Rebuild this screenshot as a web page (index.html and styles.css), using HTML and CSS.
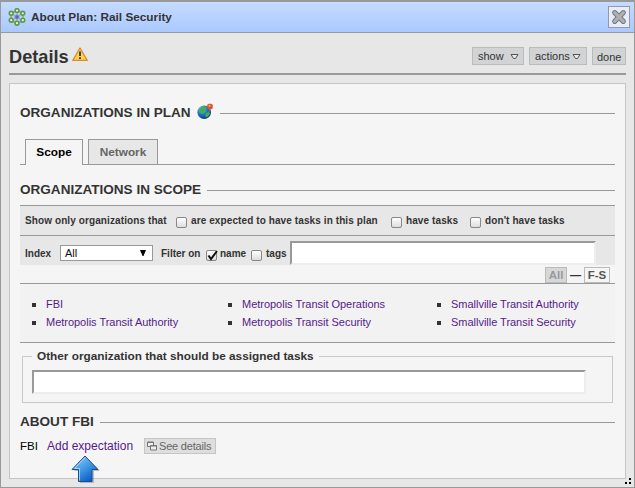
FILE: index.html
```html
<!DOCTYPE html>
<html lang="en">
<head>
<meta charset="utf-8">
<title>About Plan: Rail Security</title>
<link rel="stylesheet" href="styles.css">
</head>
<body>
<div class="window">
  <header class="titlebar">
    <svg class="plan-icon" viewBox="0 0 18 18" width="18" height="18">
      <circle cx="9" cy="9" r="6" fill="none" stroke="#8fb08b" stroke-width="1.8"/>
      <path d="M3 5 15 13M3 13 15 5M9 2V16" stroke="#98a8b0" stroke-width="1.2"/>
      <g fill="#e5f4df" stroke="#5a9950" stroke-width="1.6">
        <circle cx="9" cy="2.6" r="1.9"/><circle cx="9" cy="15.2" r="1.9"/>
        <circle cx="3.2" cy="5.3" r="1.9"/><circle cx="14.8" cy="5.3" r="1.9"/>
        <circle cx="3.2" cy="12.2" r="1.9"/><circle cx="14.8" cy="12.2" r="1.9"/>
      </g>
      <circle cx="9" cy="9" r="2.3" fill="#5b67ad" stroke="#9aa8d2"/>
    </svg>
    <span class="title">About Plan: Rail Security</span>
    <button class="close" aria-label="Close">
      <svg viewBox="0 0 16 16" width="16" height="16"><path d="M3.7 3.7 12.3 12.3M12.3 3.7 3.7 12.3" stroke="#777" stroke-width="5.2" stroke-linecap="round"/><path d="M3.7 3.7 12.3 12.3M12.3 3.7 3.7 12.3" stroke="#b0b0b0" stroke-width="3.2" stroke-linecap="round"/></svg>
    </button>
  </header>
  <div class="toolbar">
    <h1>Details</h1>
    <svg class="warn" viewBox="0 0 16 15" width="16" height="15"><path d="M8 1 15.2 13.4H.8Z" fill="#ffd34d" stroke="#d98b35" stroke-width="1.3" stroke-linejoin="round"/><path d="M7 4.5H9V9H7ZM7 10.2H9V12H7Z" fill="#44423c"/></svg>
    <div class="menus">
      <button class="menu show">show<svg viewBox="0 0 9 7" width="9" height="7"><path d="M1 1.5H8L5.5 5.5H3.5Z" fill="#e8e8e8" stroke="#555"/></svg></button>
      <button class="menu actions">actions<svg viewBox="0 0 9 7" width="9" height="7"><path d="M1 1.5H8L5.5 5.5H3.5Z" fill="#e8e8e8" stroke="#555"/></svg></button>
      <button class="menu done">done</button>
    </div>
  </div>
  <main class="panel">
    <h2 class="h-plan"><span>ORGANIZATIONS IN PLAN</span>
      <svg class="globe" viewBox="0 0 17 17" width="17" height="17">
        <defs><radialGradient id="sea" cx=".35" cy=".3" r=".75"><stop offset="0" stop-color="#8bd5ff"/><stop offset=".5" stop-color="#1977c8"/><stop offset="1" stop-color="#093477"/></radialGradient></defs>
        <circle cx="7.2" cy="9.2" r="6.8" fill="url(#sea)"/>
        <path d="M4 4.5 8 3.2 10 5 7 8 8 10 5 11 2 8ZM9 10 12 8.8 13 11 10 14.5 8 13Z" fill="#48ad45"/>
        <path d="M13 5 12 9" stroke="#777"/><rect x="10.3" y=".8" width="5.4" height="5.4" rx="1.5" fill="#df5331"/><circle cx="12.5" cy="2.8" r="1" fill="#ffae83"/>
      </svg>
    </h2>
    <nav class="tabs"><a class="tab active">Scope</a><a class="tab">Network</a></nav>
    <h2 class="h-scope"><span>ORGANIZATIONS IN SCOPE</span></h2>
    <div class="filters">
      <span class="only">Show only organizations that</span>
      <i class="check"></i><span class="expected">are expected to have tasks in this plan</span>
      <i class="check"></i><span class="have">have tasks</span>
      <i class="check"></i><span>don't have tasks</span>
    </div>
    <div class="index-row">
      <span class="index">Index</span>
      <div class="select"><span>All</span><svg viewBox="0 0 6 6" width="6" height="6"><path d="M0 0H6L3.5 6H2.5Z"/></svg></div>
      <span class="filter-on">Filter on</span>
      <i class="check"><svg viewBox="0 0 12 12" width="12" height="12"><path d="M2.5 5.5 5 9 11 1" fill="none" stroke="#111" stroke-width="2"/></svg></i><span class="name">name</span>
      <i class="check"></i><span class="tags">tags</span>
      <input class="field search" aria-label="Filter">
    </div>
    <div class="range"><span class="chip current">All</span><span class="dash">—</span><span class="chip">F-S</span></div>
    <ul class="orgs">
      <li><a>FBI</a></li><li><a>Metropolis Transit Operations</a></li><li><a>Smallville Transit Authority</a></li>
      <li><a>Metropolis Transit Authority</a></li><li><a>Metropolis Transit Security</a></li><li><a>Smallville Transit Security</a></li>
    </ul>
    <fieldset><legend>Other organization that should be assigned tasks</legend><input class="field other" aria-label="Other organization"></fieldset>
    <h2 class="h-about"><span>ABOUT FBI</span></h2>
    <div class="about"><span class="fbi">FBI</span><a class="add">Add expectation</a>
      <button class="details"><svg viewBox="0 0 10 10" width="10" height="10"><path d="M.5 5.5V1H6.5V5.5ZM.5 1.5H6.5" fill="#eee" stroke="#777"/><path d="M3.5 9V4.5H9.5V9ZM3.5 5H9.5" fill="#eee" stroke="#777"/></svg><span>See details</span></button>
    </div>
  </main>
  <svg class="pointer" viewBox="0 0 30 30" width="30" height="30">
    <defs><linearGradient id="blue" x2=".7" y2="1"><stop offset="0" stop-color="#9bd3fa"/><stop offset=".55" stop-color="#3f98e4"/><stop offset="1" stop-color="#0759c5"/></linearGradient></defs>
    <path d="M16 3 30 17H24V29H10V17H4Z" fill="#777" opacity=".45"/>
    <path d="M15 2 28 15.5H22V27.5H8.5V15.5H2Z" fill="url(#blue)" stroke="#174f94" stroke-linejoin="round"/>
    <path d="M4.5 14.5H9.5V26.5M4.5 14.5 15 3.5" fill="none" stroke="#b9e1ff" stroke-width=".8"/>
  </svg>
  <svg class="grip" viewBox="0 0 6 6" width="6" height="6"><path d="M4 0H6V2H4ZM0 4H2V6H0ZM4 4H6V6H4Z"/></svg>
</div>
</body>
</html>
```
FILE: styles.css
```css
* { box-sizing: border-box; }
body { margin: 0; font-family: "Liberation Sans", Arial, sans-serif; color: #333; font-size: 11px; overflow: hidden; }
svg { display: block; flex: none; }
button { font: inherit; padding: 0; margin: 0; color: #333; }
.window { position: relative; width: 635px; height: 488px; background: #e7e7e7; border: 1px solid #999; border-top-width: 2px; }
.titlebar { height: 31px; display: flex; align-items: center; padding: 0 4px 0 7px; background: linear-gradient(#c5dbff, #abc9ff); border-bottom: 1px solid #999; }
.title { margin-left: 5px; font-size: 11.8px; line-height: 13px; font-weight: bold; white-space: nowrap; }
.close { margin-left: auto; width: 22px; height: 22px; display: grid; place-items: center; background: #e4edff; border: 1px solid #999; }
.toolbar { height: 42px; margin: 0 8px; border-bottom: 2px solid #999; display: flex; align-items: flex-start; }
h1 { margin: 13px 4px 0 0; width: 59px; font-size: 18.2px; line-height: 23px; }
.warn { margin-top: 14px; }
.menus { display: flex; margin: 14px 0 0 auto; gap: 5px; }
.menu { height: 18px; background: #d1d3d5; border: 1px solid #b9bbbd; display: flex; align-items: center; justify-content: space-between; padding: 0 4px 0 5px; line-height: 16px; }
.show { width: 52px; }
.actions { width: 58px; padding-right: 5px; }
.done { width: 34px; padding: 1px 4px 0; }
.panel { height: 396px; margin: 8px 8px 0; padding: 19px 10px 0; background: #f5f5f5; border: 1px solid #c5c5c5; }
h2 { display: flex; align-items: center; margin: 0; font-size: 13.55px; line-height: 20px; height: 20px; }
h2::after { content: ""; height: 1px; background: #999; flex: 1; margin-left: 6px; }
h2 span { white-space: nowrap; }
.globe { margin-left: 6px; margin-top: -3px; }
.tabs { display: flex; gap: 5px; height: 26px; margin-top: 16px; padding-left: 5px; border-bottom: 1px solid #999; }
.tab { height: 25px; width: 70px; border: 1px solid #999; border-bottom: 0; background: #e7e7e7; color: #666; font-size: 11.8px; font-weight: bold; text-align: center; line-height: 25px; }
.tab.active { width: 58px; height: 26px; background: #f5f5f5; color: #000; }
.h-scope { margin-top: 15px; }
.filters { height: 30px; margin-top: 5px; border-top: 1px solid #999; background: #e7e7e7; display: flex; align-items: center; padding-left: 5px; font-size: 10px; font-weight: bold; letter-spacing: .1px; white-space: nowrap; }
.check { width: 11px; height: 11px; flex: none; border: 1px solid #888; border-radius: 2px; background: linear-gradient(#fff, #ddd); margin-top: 4px; }
.check svg { margin: -1px; overflow: visible; }
.only { width: 151px; }
.filters .check { margin-right: 4px; }
.expected { width: 200px; }
.have { width: 64px; }
.index-row { height: 30px; border-top: 1px solid #999; background: #e7e7e7; display: flex; align-items: center; padding: 5px 0 0 5px; font-size: 10px; font-weight: bold; white-space: nowrap; }
.index { width: 35px; }
.select { width: 93px; height: 16px; border: 1px solid #999; background: #fff; padding: 0 6px 0 4px; display: flex; align-items: center; justify-content: space-between; color: #111; font-size: 11px; font-weight: normal; }
.filter-on { margin-left: 8px; width: 45px; }
.name { width: 31px; margin-left: 3px; }
.tags { width: 24px; margin-left: 4px; }
.field { display: block; margin: 0; padding: 0; border: 2px solid; border-color: #999 #eee #eee #999; background: #fff; outline: 0; }
.search { width: 306px; height: 24px; }
.range { height: 18px; display: flex; align-items: center; justify-content: flex-end; padding-right: 5px; padding-top: 1px; font-weight: bold; }
.chip { border: 1px solid #bbb; height: 16px; line-height: 14px; width: 26px; text-align: center; color: #555; font-size: 11.5px; }
.current { width: 22px; background: #d5d7d9; color: #999; }
.dash { width: 17px; text-align: center; }
.orgs { display: grid; grid-template-columns: 196px 209px 1fr; grid-template-rows: 18px 18px; height: 60px; margin: 0; padding: 11px 0 0 12px; border-top: 1px solid #999; border-bottom: 1px solid #999; background: #f2f2f2; list-style: none; }
.orgs li { display: flex; align-items: center; white-space: nowrap; letter-spacing: -.02px; }
.orgs li::before { content: ""; width: 4px; height: 4px; margin: 1px 10px 0 0; background: #333; }
a { color: #551a8b; }
fieldset { height: 54px; margin: 6px 2px 0; padding: 6px 9px 0; border: 1px solid #c9c9c9; min-width: 0; }
legend { font-size: 11.8px; font-weight: bold; padding: 0 5px; line-height: 15px; white-space: nowrap; }
.other { width: 554px; height: 24px; }
.h-about { margin-top: 9px; }
.about { display: flex; height: 18px; align-items: center; margin-top: 5px; white-space: nowrap; }
.fbi { width: 27px; color: #000; font-size: 11.5px; }
.add { width: 97px; font-size: 12px; }
.details { width: 72px; height: 16px; display: flex; align-items: center; gap: 2px; padding: 0 2px; background: #dedede; border: 1px solid #c5c5c5; color: #666; white-space: nowrap; letter-spacing: -.2px; }
.pointer { position: absolute; left: 69px; top: 452px; }
.grip { position: absolute; right: 3px; bottom: 3px; }
```
